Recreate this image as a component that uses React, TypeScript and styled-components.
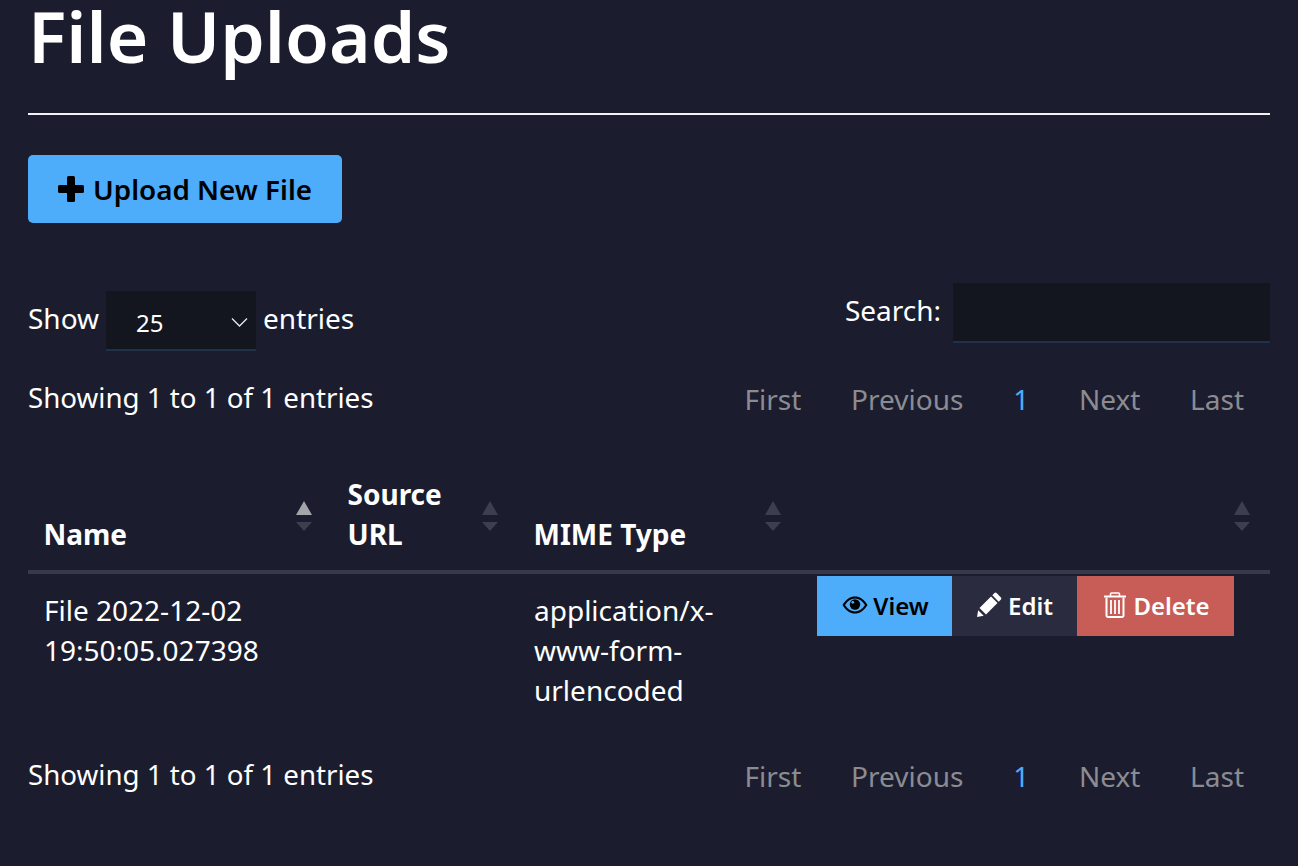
import React from 'react';
import styled, { createGlobalStyle } from 'styled-components';

const GlobalStyle = createGlobalStyle`
  html, body {
    margin: 0;
    height: 100%;
    overflow: hidden;
    background: #1b1d2e;
    color: #fff;
    font-family: "Noto Sans", "Open Sans", sans-serif;
    font-size: 28px;
  }
`;

const PlusIcon = () => (
  <svg width="26" height="26" viewBox="0 0 26 26" fill="currentColor">
    <rect x="0" y="9" width="26" height="8" rx="1.5" />
    <rect x="9" y="0" width="8" height="26" rx="1.5" />
  </svg>
);

const EyeIcon = () => (
  <svg width="26" height="18" viewBox="0 0 26 18" fill="currentColor">
    <path
      fillRule="evenodd"
      d="M.5 9C4 3 8.5.5 13 .5S22 3 25.5 9C22 15 17.5 17.5 13 17.5S4 15 .5 9ZM3 9c3 4.500 6.500 6.500 10 6.500S20 13.500 23 9c-3-4.500-6.500-6.500-10-6.500S6 4.500 3 9Z"
    />
    <circle cx="13" cy="8.500" r="5.200" />
    <circle cx="10.800" cy="6.300" r="1.400" fill="#4dadfb" />
  </svg>
);

const PencilIcon = () => (
  <svg width="26" height="26" viewBox="0 0 26 26" fill="currentColor">
    <path d="M1 25 2.200 18.300 7.700 23.800Z" />
    <path d="M3.500 16 15 4.500 21.500 11 10 22.500Z" />
    <path d="M16.300 3.300 18.500 1.100a1.500 1.500 0 0 1 2.100 0l4.300 4.300a1.500 1.500 0 0 1 0 2.100L22.700 9.700Z" />
  </svg>
);

const TrashIcon = () => (
  <svg width="22" height="26" viewBox="0 0 22 26" fill="none" stroke="currentColor">
    <path d="M0 4.500H22" strokeWidth="2" />
    <path d="M6.500 4V2a1 1 0 0 1 1-1h7a1 1 0 0 1 1 1v2" strokeWidth="1.600" />
    <path d="M2.500 5.500v18a1.500 1.500 0 0 0 1.500 1.500h14a1.500 1.500 0 0 0 1.500-1.500v-18" strokeWidth="2" />
    <path d="M7 8v14M11 8v14M15 8v14" strokeWidth="1.800" />
  </svg>
);

const Pager = () => (
  <Pagination>
    <PageLink>First</PageLink>
    <PageLink>Previous</PageLink>
    <PageLink $current>1</PageLink>
    <PageLink>Next</PageLink>
    <PageLink>Last</PageLink>
  </Pagination>
);

const columns = [
  { label: 'Name', width: 304, active: true },
  { label: 'Source URL', width: 186, active: false },
  { label: 'MIME Type', width: 283, active: false },
  { label: '', width: 469, active: false },
];

const App = () => (
  <Page>
    <GlobalStyle />
    <Title>File Uploads</Title>
    <Rule />
    <UploadButton>
      <PlusIcon />
      Upload New File
    </UploadButton>

    <Controls>
      <Label>
        <LabelText>Show</LabelText>
        <SelectBox>
          25
          <svg width="17" height="10" viewBox="0 0 17 10" fill="none">
            <path d="M1 1.500 8.500 9 16 1.500" stroke="#e6e6e6" strokeWidth="1.400" />
          </svg>
        </SelectBox>
        <LabelText>entries</LabelText>
      </Label>
      <SearchLabel>
        <LabelText>Search:</LabelText>
        <SearchInput />
      </SearchLabel>
    </Controls>

    <InfoRow>
      <Info>Showing 1 to 1 of 1 entries</Info>
      <Pager />
    </InfoRow>

    <Table>
      <colgroup>
        {columns.map((c) => (
          <col key={c.label} width={c.width} />
        ))}
      </colgroup>
      <thead>
        <tr>
          {columns.map((c) => (
            <HeadCell key={c.label}>
              {c.label}
              <SortUp $active={c.active} />
              <SortDown />
            </HeadCell>
          ))}
        </tr>
      </thead>
      <tbody>
        <tr>
          <Cell>File 2022-12-02 19:50:05.027398</Cell>
          <Cell />
          <MimeCell>application/x-www-form-urlencoded</MimeCell>
          <ActionCell>
            <Actions>
              <ActionButton $bg="#4dadfb" $fg="#000" $width={135} $gap={5} $inset={2}>
                <EyeIcon />
                View
              </ActionButton>
              <ActionButton $bg="#2a2b3e" $fg="#fff" $width={125} $gap={6} $inset={0}>
                <PencilIcon />
                Edit
              </ActionButton>
              <ActionButton $bg="#c85d57" $fg="#fff" $width={157} $gap={7} $inset={3}>
                <TrashIcon />
                Delete
              </ActionButton>
            </Actions>
          </ActionCell>
        </tr>
      </tbody>
    </Table>

    <BottomRow>
      <Info>Showing 1 to 1 of 1 entries</Info>
      <Pager />
    </BottomRow>
  </Page>
);

export default App;

const Page = styled.div`
  padding: 0 28px;
  height: 866px;
  overflow: hidden;
  box-sizing: border-box;
`;
const Title = styled.h1`
  margin: 0;
  font-size: 71.3px;
  line-height: 72px;
  font-weight: 600;
`;
const Rule = styled.hr`
  margin: 41px 0 40px;
  border: 0;
  height: 2px;
  background: #f2f2f2;
`;
const UploadButton = styled.button`
  display: flex;
  align-items: center;
  gap: 9px;
  box-sizing: border-box;
  width: 314px;
  height: 68px;
  padding: 0 0 0 30px;
  border: 0;
  border-radius: 5px;
  background: #4dadfb;
  color: #000;
  font: 600 27.8px "Noto Sans", sans-serif;
`;
const Controls = styled.div`
  display: flex;
  justify-content: space-between;
  align-items: flex-start;
  margin-top: 60px;
`;
const Label = styled.div`
  display: flex;
  align-items: center;
  gap: 7px;
  margin-top: 8px;
  height: 60px;
`;
const LabelText = styled.span`
  margin-bottom: 6px;
`;
const SelectBox = styled.div`
  display: flex;
  align-items: center;
  justify-content: space-between;
  box-sizing: border-box;
  width: 150px;
  height: 60px;
  padding: 4px 8px 0 30px;
  background: #13151f;
  border-bottom: 2px solid #1f324a;
  font-size: 24px;
`;
const SearchLabel = styled.div`
  display: flex;
  align-items: center;
  gap: 12px;
`;
const SearchInput = styled.div`
  box-sizing: border-box;
  width: 317px;
  height: 60px;
  background: #13151f;
  border-bottom: 2px solid #1f324a;
`;
const InfoRow = styled.div`
  display: flex;
  justify-content: space-between;
  align-items: flex-start;
  margin-top: 26px;
`;
const BottomRow = styled(InfoRow)`
  margin-top: 30px;
`;
const Info = styled.div`
  font-size: 27.7px;
  line-height: 40px;
`;
const Pagination = styled.div`
  display: flex;
  padding-top: 2px;
`;
const PageLink = styled.span<{ $current?: boolean }>`
  padding: 0 26px 0 23.75px;
  line-height: 40px;
  color: ${(p) => (p.$current ? '#4dadfb' : '#8b8c92')};
`;
const Table = styled.table`
  width: 1242px;
  margin-top: 40px;
  border-collapse: collapse;
  table-layout: fixed;
`;
const HeadCell = styled.th`
  position: relative;
  box-sizing: border-box;
  height: 113px;
  padding: 0 50px 16px 15.5px;
  vertical-align: bottom;
  text-align: left;
  font-weight: 700;
  line-height: 40px;
  border-bottom: 4px solid #383a4a;
`;
const SortUp = styled.span<{ $active?: boolean }>`
  position: absolute;
  right: 20px;
  top: 42px;
  width: 0;
  height: 0;
  border-left: 8px solid transparent;
  border-right: 8px solid transparent;
  border-bottom: 14px solid ${(p) => (p.$active ? '#a4a4ab' : '#3d3f50')};
`;
const SortDown = styled.span`
  position: absolute;
  right: 20px;
  top: 63px;
  width: 0;
  height: 0;
  border-left: 8px solid transparent;
  border-right: 8px solid transparent;
  border-top: 9px solid #3d3f50;
`;
const Cell = styled.td`
  padding: 16px 16px 14px 16px;
  vertical-align: top;
  line-height: 40px;
  overflow-wrap: break-word;
`;
const MimeCell = styled(Cell)`
  padding-right: 60px;
`;
const ActionCell = styled.td`
  padding: 2px 0 0 16px;
  vertical-align: top;
`;
const Actions = styled.div`
  display: flex;
`;
const ActionButton = styled.div<{ $bg: string; $fg: string; $width: number; $gap: number; $inset: number }>`
  display: flex;
  align-items: center;
  justify-content: center;
  gap: ${(p) => p.$gap}px;
  box-sizing: border-box;
  height: 60px;
  padding: 0 0 2px ${(p) => p.$inset}px;
  width: ${(p) => p.$width}px;
  background: ${(p) => p.$bg};
  color: ${(p) => p.$fg};
  font-size: 24px;
  font-weight: 600;
`;
